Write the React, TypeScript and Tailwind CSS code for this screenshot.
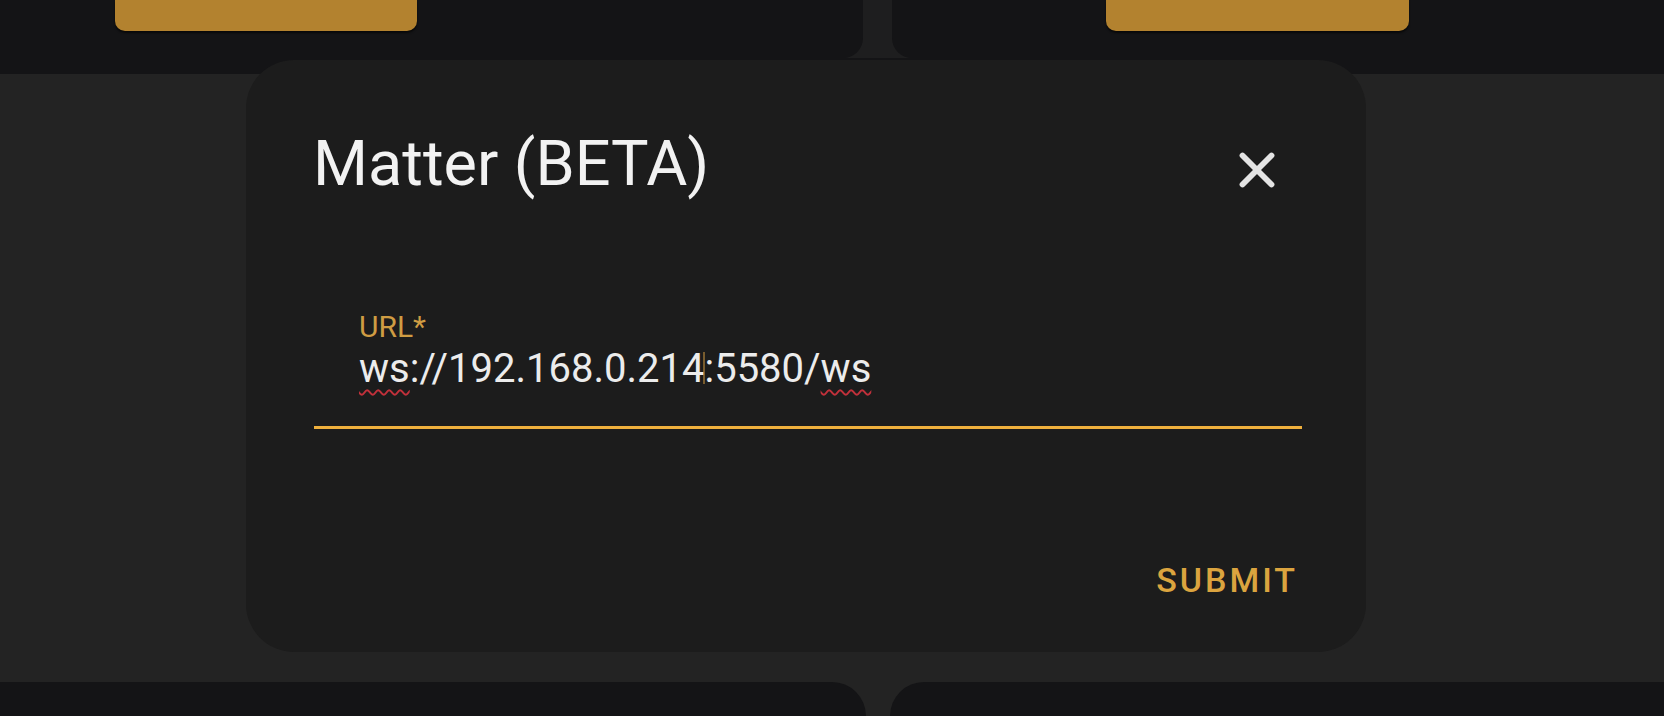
import { X } from "lucide-react";

// Backdrop: dimmed dashboard cards peeking out above and below the dialog.
function TopCards() {
  return (
    <div className="flex h-[74px] shrink-0 items-start bg-[#141416]">
      <div className="w-[843px] shrink-0">
        <div className="ml-[115px] h-[31px] w-[302px] rounded-b-[10px] bg-[#b3822f] shadow-[0_2px_2px_rgba(0,0,0,0.6)]" />
      </div>
      <div className="flex h-[58px] w-[69px] shrink-0 bg-[#1e1e1f]">
        <div className="h-full w-[20px] rounded-br-[20px] bg-[#141416]" />
        <div className="h-full flex-1" />
        <div className="h-full w-[20px] rounded-bl-[20px] bg-[#141416]" />
      </div>
      <div className="flex-1">
        <div className="ml-[194px] h-[31px] w-[303px] rounded-b-[10px] bg-[#b3822f] shadow-[0_2px_2px_rgba(0,0,0,0.6)]" />
      </div>
    </div>
  );
}

function BottomCards() {
  return (
    <div className="flex h-[34px] shrink-0 bg-[#232323]">
      <div className="h-full w-[866px] shrink-0 rounded-tr-[60px] bg-[#141416]" />
      <div className="h-full w-[24px] shrink-0" />
      <div className="h-full flex-1 rounded-tl-[60px] bg-[#141416]" />
    </div>
  );
}

function Misspelled({ children }: { children: string }) {
  return (
    <span className="underline decoration-[#c2303a] decoration-wavy decoration-[2px] underline-offset-[7px]">
      {children}
    </span>
  );
}

function MatterDialog() {
  return (
    <div className="absolute left-[246px] top-[60px] flex h-[592px] w-[1120px] flex-col rounded-[48px] bg-[#1c1c1c] pt-[72px]">
      {/* Header */}
      <div className="flex items-start justify-between pl-[67px] pr-[75px]">
        <h2 className="text-[63px] font-normal leading-[63px] text-[#f2f2f2]">Matter (BETA)</h2>
        <button className="mt-[4px] flex h-[68px] w-[68px] items-center justify-center text-[#e4e4e4]">
          <X size={58} strokeWidth={2.4} />
        </button>
      </div>

      {/* URL field */}
      <div className="ml-[68px] mr-[64px] mt-[108px]">
        <div className="pl-[45px]">
          <div className="text-[30px] leading-[30px] text-[#cf9c43]">URL*</div>
          <div className="mt-[7px] whitespace-nowrap text-[40px] leading-[40px] text-[#ececec]">
            <Misspelled>ws</Misspelled>://192.168.0.214
            <span className="-mx-[1px] inline-block h-[32px] w-[2px] translate-y-[2px] bg-[#b8873a]/60" />
            :5580/<Misspelled>ws</Misspelled>
          </div>
        </div>
        <div className="mt-[37px] h-[3px] w-full bg-[#efb03d]" />
      </div>

      {/* Actions */}
      <div className="mt-[134px] flex justify-end pr-[68px]">
        <button className="text-[34px] font-medium leading-[34px] tracking-[0.088em] text-[#dba43f]">
          SUBMIT
        </button>
      </div>
    </div>
  );
}

export default function App() {
  return (
    <div className="relative flex h-[716px] w-full flex-col overflow-hidden bg-[#232323] font-['Roboto',sans-serif]">
      <TopCards />
      <div className="flex-1 bg-[#232323]" />
      <BottomCards />
      <MatterDialog />
    </div>
  );
}
